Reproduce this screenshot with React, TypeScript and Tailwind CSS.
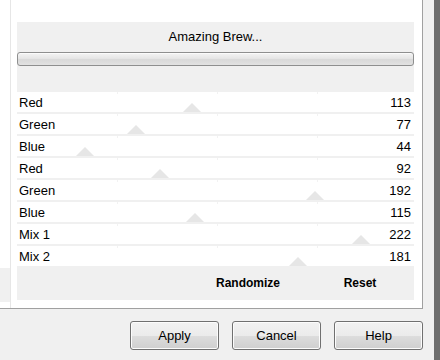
import React from "react";

const rows: { label: string; value: number }[] = [
  { label: "Red", value: 113 },
  { label: "Green", value: 77 },
  { label: "Blue", value: 44 },
  { label: "Red", value: 92 },
  { label: "Green", value: 192 },
  { label: "Blue", value: 115 },
  { label: "Mix 1", value: 222 },
  { label: "Mix 2", value: 181 },
];

function Row({ label, value }: { label: string; value: number }) {
  const x = Math.round(value * 1.55);
  return (
    <div className="relative h-[20px] bg-white flex items-center justify-between pl-[2px] pr-[3px] text-[13px] text-black leading-none">
      <span className="absolute top-0 left-[100px] w-px h-[2px] bg-[#f2f2f2]" />
      <span className="absolute top-0 left-[200px] w-px h-[2px] bg-[#f2f2f2]" />
      <span className="absolute top-0 left-[300px] w-px h-[2px] bg-[#f2f2f2]" />
      <span
        className="absolute bottom-0 w-0 h-0 border-l-[9px] border-r-[9px] border-b-[9px] border-l-transparent border-r-transparent border-b-[#e6e6e6]"
        style={{ left: x - 9 }}
      />
      <span className="relative">{label}</span>
      <span className="relative">{value}</span>
    </div>
  );
}

function WinButton({ children }: { children: React.ReactNode }) {
  return (
    <div className="w-[89px] h-[29px] rounded-[3px] border border-[#707070] bg-[linear-gradient(to_bottom,#f2f2f2,#ebebeb_50%,#dddddd_51%,#cfcfcf)] flex items-center justify-center text-[13px] text-black shadow-[inset_0_0_0_1px_#fcfcfc]">
      {children}
    </div>
  );
}

export default function App() {
  return (
    <div
      className="w-[440px] h-[360px] flex bg-[#f0f0f0] overflow-hidden"
      style={{ fontFamily: '"Liberation Sans", Arial, sans-serif' }}
    >
      <div className="w-[434px] flex flex-col">
        <div className="w-[423px] h-[309px] flex bg-white border-r border-b border-[#a0a0a0]">
          <div className="w-[11px] flex flex-col border-r border-[#e6e6e6]">
            <div className="h-[268px] bg-white" />
            <div className="h-[34px] bg-[#f0f0f0]" />
            <div className="flex-1 bg-white" />
          </div>
          <div className="w-[6px]" />
          <div className="w-[397px] flex flex-col pt-[22px] pb-[8px]">
            <div className="flex-1 bg-[#f0f0f0] flex flex-col">
              <div className="h-[30px] flex items-center justify-center text-[13px] text-black">
                Amazing Brew...
              </div>
              <div className="h-[14px] rounded-[3px] border border-[#8e8f8f] bg-[linear-gradient(to_bottom,#f4f4f4,#e6e6e6_45%,#d9d9d9_55%,#e2e2e2)] shadow-[inset_0_1px_0_#fbfbfb]" />
              <div className="h-[26px]" />
              <div className="flex flex-col gap-[2px]">
                {rows.map((r, i) => (
                  <Row key={i} label={r.label} value={r.value} />
                ))}
              </div>
              <div className="flex-1 flex items-center justify-end pr-[4px] gap-[12px] text-[12px] font-bold text-black">
                <div className="w-[100px] text-center">Randomize</div>
                <div className="w-[100px] text-center">Reset</div>
              </div>
            </div>
          </div>
        </div>
        <div className="flex justify-end gap-[13px] pt-[12px] pr-[11px]">
          <WinButton>Apply</WinButton>
          <WinButton>Cancel</WinButton>
          <WinButton>Help</WinButton>
        </div>
      </div>
      <div className="w-[6px] bg-[#6e6e6e]" />
    </div>
  );
}
